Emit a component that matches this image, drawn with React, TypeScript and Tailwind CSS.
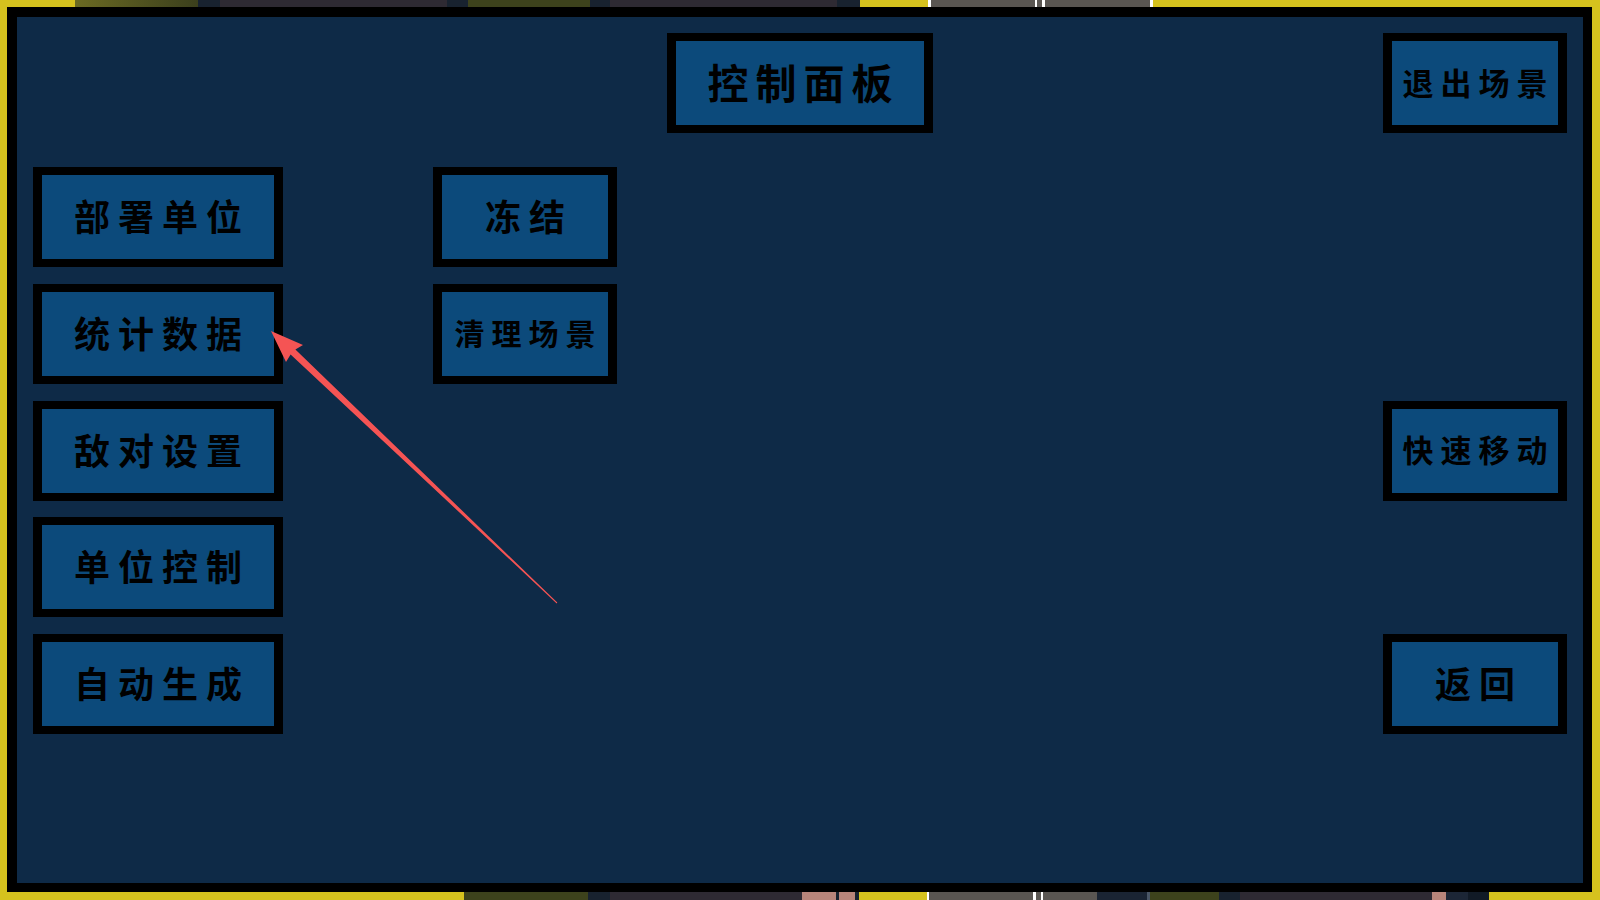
import React from 'react';

// 顶部/底部被截到的条带（背景里其他窗口露出的部分）
const topStrip = [
  'w-[75px] bg-[#d6c21e]',
  'w-[123px] bg-gradient-to-r from-[#6b6a22] to-[#3b3f1c]',
  'w-[22px] bg-[#18222f]',
  'w-[227px] bg-[#2e2a33]',
  'w-[21px] bg-[#18222f]',
  'w-[122px] bg-[#3d421c]',
  'w-[20px] bg-[#18222f]',
  'w-[227px] bg-[#2e2a33]',
  'w-[23px] bg-[#18222f]',
  'w-[68px] bg-[#d6c21e]',
  'w-[3px] bg-white',
  'w-[104px] bg-[#5a5652]',
  'w-[2px] bg-white',
  'w-[5px] bg-[#5a5652]',
  'w-[3px] bg-white',
  'w-[105px] bg-[#5a5652]',
  'w-[3px] bg-white',
  'flex-1 bg-[#d6c21e]',
];

const bottomStrip = [
  'w-[464px] bg-[#d6c21e]',
  'w-[124px] bg-[#3d421c]',
  'w-[22px] bg-[#18222f]',
  'w-[192px] bg-[#2e2a33]',
  'w-[34px] bg-[#b8857a]',
  'w-[3px] bg-[#18222f]',
  'w-[16px] bg-[#b8857a]',
  'w-[4px] bg-[#18222f]',
  'w-[68px] bg-[#d6c21e]',
  'w-[2px] bg-white',
  'w-[104px] bg-[#5a5652]',
  'w-[3px] bg-white',
  'w-[5px] bg-[#5a5652]',
  'w-[2px] bg-white',
  'w-[54px] bg-[#5a5652]',
  'w-[50px] bg-[#1a2433]',
  'w-[3px] bg-[#4a5666]',
  'w-[69px] bg-[#3d421c]',
  'w-[21px] bg-[#18222f]',
  'w-[192px] bg-[#2e2a33]',
  'w-[14px] bg-[#b8857a]',
  'w-[22px] bg-[#1c2636]',
  'w-[21px] bg-[#111a26]',
  'flex-1 bg-[#d6c21e]',
];

interface BtnProps {
  label: string;
  text: string;
  className?: string;
}

function PanelButton({ label, text, className = '' }: BtnProps) {
  return (
    <button
      className={`h-[100px] pb-[4px] flex items-center justify-center bg-[#0c4a7b] border-x-[9px] border-y-[8px] border-black font-bold text-black leading-none ${text} ${className}`}
    >
      {label}
    </button>
  );
}

export default function App() {
  const fontStyle = "font-['Noto_Sans_CJK_SC','Noto_Sans',sans-serif]";

  return (
    <div className={`relative w-[1600px] h-[900px] bg-[#d6c21e] flex flex-col overflow-hidden ${fontStyle}`}>
      <div className="h-[7px] flex shrink-0">
        {topStrip.map((c, i) => (
          <div key={i} className={c} />
        ))}
      </div>

      <div className="flex flex-1 min-h-0">
        <div className="w-[7px] shrink-0" />
        <div className="flex-1 border-l-[10px] border-t-[10px] border-r-[9px] border-b-[9px] border-black bg-[#0e2a47] p-4 flex flex-col">
          {/* 标题行 */}
          <div className="relative flex justify-center">
            <PanelButton label="控制面板" text="w-[266px] text-[41px] tracking-[7px] pl-[7px]" />
            <PanelButton
              label="退出场景"
              text="w-[184px] text-[31px] tracking-[7px] pl-[7px]"
              className="absolute right-0 top-0"
            />
          </div>

          {/* 按钮网格 */}
          <div className="mt-[34px] grid grid-cols-[250px_184px_1fr_184px] grid-rows-[repeat(5,100px)] gap-x-[150px] gap-y-[16.75px]">
            <PanelButton label="部署单位" text="text-[36px] tracking-[8px] pl-[8px]" className="col-start-1 row-start-1" />
            <PanelButton label="冻结" text="text-[36px] tracking-[8px] pl-[8px]" className="col-start-2 row-start-1" />
            <PanelButton label="统计数据" text="text-[36px] tracking-[8px] pl-[8px]" className="col-start-1 row-start-2" />
            <PanelButton label="清理场景" text="text-[30px] tracking-[7px] pl-[7px]" className="col-start-2 row-start-2" />
            <PanelButton label="敌对设置" text="text-[36px] tracking-[8px] pl-[8px]" className="col-start-1 row-start-3" />
            <PanelButton label="快速移动" text="text-[31px] tracking-[7px] pl-[7px]" className="col-start-4 row-start-3" />
            <PanelButton label="单位控制" text="text-[36px] tracking-[8px] pl-[8px]" className="col-start-1 row-start-4" />
            <PanelButton label="自动生成" text="text-[36px] tracking-[8px] pl-[8px]" className="col-start-1 row-start-5" />
            <PanelButton label="返回" text="text-[36px] tracking-[8px] pl-[8px]" className="col-start-4 row-start-5" />
          </div>
        </div>
        <div className="w-[8px] shrink-0" />
      </div>

      <div className="h-[8px] flex shrink-0">
        {bottomStrip.map((c, i) => (
          <div key={i} className={c} />
        ))}
      </div>

      {/* 标注箭头 */}
      <svg className="absolute left-0 top-0 pointer-events-none" width="1600" height="900" viewBox="0 0 1600 900">
        <polygon
          fill="#f55454"
          points="271,331 303,345 295.4,349.5 557.3,602.6 556.7,603.4 290.6,354.5 286,362"
        />
      </svg>
    </div>
  );
}
